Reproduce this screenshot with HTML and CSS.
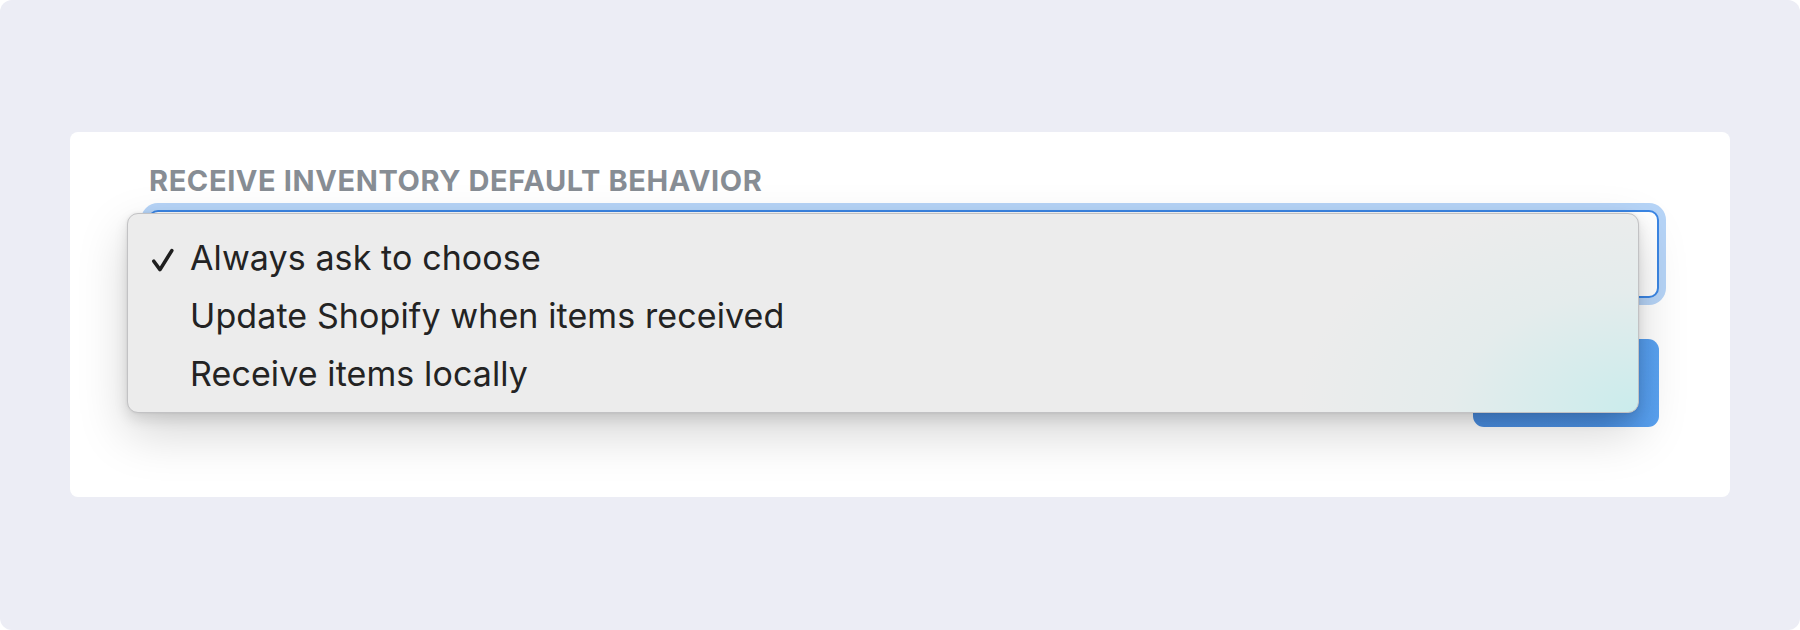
FILE: index.html
```html
<!DOCTYPE html>
<html lang="en">
<head>
<meta charset="utf-8">
<title>Receive inventory default behavior</title>
<link rel="stylesheet" href="styles.css">
</head>
<body>
<div class="frame">
  <div class="card">
    <div class="label">RECEIVE INVENTORY DEFAULT BEHAVIOR</div>
    <div class="select">
      <ul class="menu">
        <li class="item selected">
          <svg class="check" viewBox="0 0 24 26" width="24" height="26" aria-hidden="true"><path d="M2.8 14.2 L9 22.6 L20.8 3.6" fill="none" stroke="#1f1f1f" stroke-width="3.6" stroke-linecap="round" stroke-linejoin="round"/></svg>
          Always ask to choose
        </li>
        <li class="item">Update Shopify when items received</li>
        <li class="item">Receive items locally</li>
      </ul>
    </div>
    <div class="actions">
      <button class="btn" type="button"></button>
    </div>
  </div>
</div>
</body>
</html>
```

FILE: styles.css
```css
html, body {
  margin: 0;
  padding: 0;
  background: #ffffff;
}

body {
  font-family: "Inter", "Liberation Sans", sans-serif;
}

.frame {
  box-sizing: border-box;
  height: 630px;
  background: #ecedf5;
  border-radius: 12px;
  padding: 132px 70px 0 70px;
}

.card {
  background: #ffffff;
  border-radius: 8px;
  padding: 32px 71px 70px 78px;
  display: flex;
  flex-direction: column;
}

.label {
  font-size: 29px;
  line-height: 33px;
  font-weight: 700;
  color: #878d94;
  letter-spacing: 0.6px;
  padding-left: 1px;
}

.select {
  position: relative;
  box-sizing: border-box;
  margin-top: 13px;
  height: 88px;
  border: 2px solid #3b86e4;
  border-radius: 10px;
  background: #ffffff;
  box-shadow: 0 0 0 7px #b6d4f7;
}

.menu {
  position: absolute;
  left: -23px;
  top: 1px;
  box-sizing: border-box;
  width: 1512px;
  height: 200px;
  margin: 0;
  padding: 15px 0 0 62px;
  list-style: none;
  background:
    radial-gradient(ellipse 340px 220px at 100% 100%, rgba(196, 236, 236, 0.85), rgba(214, 236, 236, 0.35) 55%, rgba(236, 236, 236, 0) 100%),
    #ececec;
  border: 1px solid #c2c2c4;
  border-radius: 11px;
  box-shadow: 0 20px 50px rgba(0, 0, 0, 0.17), 0 6px 14px rgba(0, 0, 0, 0.11), 0 0 3px rgba(0, 0, 0, 0.08);
  z-index: 2;
}

.item {
  position: relative;
  font-size: 34px;
  line-height: 58px;
  color: #232323;
  letter-spacing: 0.1px;
  white-space: nowrap;
}

.check {
  position: absolute;
  left: -39px;
  top: 18px;
}

.actions {
  display: flex;
  justify-content: flex-end;
  margin-top: 41px;
}

.btn {
  width: 186px;
  height: 88px;
  border: 0;
  border-radius: 11px;
  background: linear-gradient(90deg, #4a8de0 0%, #4c91e4 70%, #5aa3f2 100%);
  padding: 0;
}
```
